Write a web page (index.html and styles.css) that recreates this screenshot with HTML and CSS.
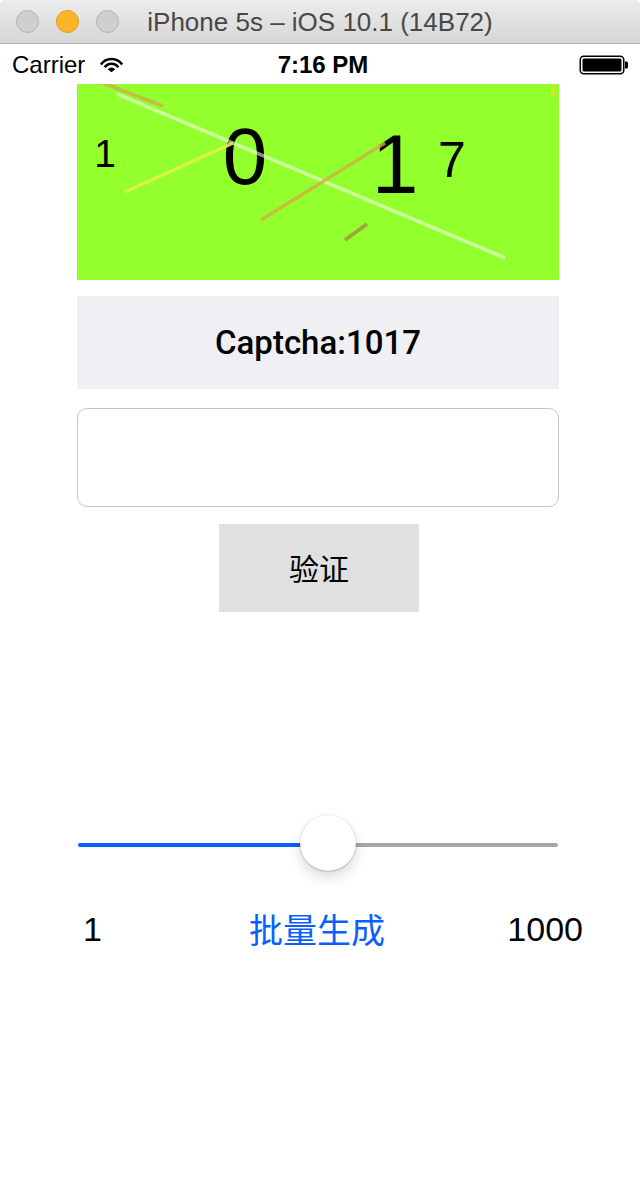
FILE: index.html
```html
<!DOCTYPE html>
<html lang="zh">
<head>
<meta charset="utf-8">
<title>iPhone 5s – iOS 10.1 (14B72)</title>
<link rel="stylesheet" href="styles.css">
</head>
<body>
<div class="window">
  <div class="titlebar">
    <div class="lights">
      <span class="light light-gray"></span>
      <span class="light light-orange"></span>
      <span class="light light-gray"></span>
    </div>
    <div class="title">iPhone 5s – iOS 10.1 (14B72)</div>
    <div></div>
  </div>
  <div class="screen">
    <div class="statusbar">
      <div class="sb-left">
        <span class="carrier">Carrier</span>
        <svg class="wifi" width="25" height="16" viewBox="0 0 25 16">
          <path d="M1.85 7.54 A13 13 0 0 1 23.15 7.54" fill="none" stroke="#000" stroke-width="2.6"/>
          <path d="M5.7 10.24 A8.3 8.3 0 0 1 19.3 10.24" fill="none" stroke="#000" stroke-width="2.6"/>
          <path d="M12.5 15.2 L8.73 12.36 A4.6 4.6 0 0 1 16.27 12.36 Z" fill="#000"/>
        </svg>
      </div>
      <div class="time">7:16 PM</div>
      <div class="sb-right">
        <svg class="battery" width="50" height="20" viewBox="0 0 50 20">
          <rect x="1.25" y="1.25" width="43.5" height="17.5" rx="3.5" fill="none" stroke="#000" stroke-width="1.5"/>
          <rect x="3.5" y="3.5" width="39" height="13" rx="1.5" fill="#000"/>
          <path d="M46 6.5 h1.5 a1.5 1.5 0 0 1 1.5 1.5 v4 a1.5 1.5 0 0 1 -1.5 1.5 h-1.5 Z" fill="#000"/>
        </svg>
      </div>
    </div>
    <main class="content">
      <div class="captcha-img">
        <svg width="482" height="196" viewBox="0 0 482 196">
          <rect width="482" height="196" fill="#93ff2d"/>
          <text x="28" y="83" font-size="39" text-anchor="middle" class="digit">1</text>
          <text x="168" y="100" font-size="80" text-anchor="middle" class="digit">0</text>
          <text x="318" y="109" font-size="84" text-anchor="middle" class="digit">1</text>
          <text x="375" y="93" font-size="50" text-anchor="middle" class="digit">7</text>
          <line x1="26" y1="-1" x2="86" y2="22" stroke="#c9b445" stroke-opacity="0.85" stroke-width="3.5"/>
          <line x1="40" y1="10" x2="428" y2="174" stroke="#ffffff" stroke-opacity="0.55" stroke-width="3.5"/>
          <line x1="48" y1="108" x2="156" y2="59" stroke="#e2f24c" stroke-opacity="0.9" stroke-width="3.5"/>
          <line x1="184" y1="136" x2="308" y2="59" stroke="#d0b040" stroke-opacity="0.8" stroke-width="3.5"/>
          <line x1="268" y1="156" x2="290" y2="140" stroke="#9e9e3a" stroke-opacity="0.9" stroke-width="4"/>
          <line x1="476" y1="0" x2="476" y2="13" stroke="#d6e81e" stroke-width="3"/>
        </svg>
      </div>
      <div class="captcha-label">Captcha:1017</div>
      <input class="code-field" type="text" aria-label="captcha">
      <button class="verify" type="button">验证</button>
      <div class="slider">
        <div class="track">
          <span class="track-min"></span>
          <span class="track-max"></span>
        </div>
        <span class="thumb"></span>
      </div>
      <div class="range-labels">
        <span class="rl-min">1</span>
        <span class="rl-action">批量生成</span>
        <span class="rl-max">1000</span>
      </div>
    </main>
  </div>
</div>
</body>
</html>
```
FILE: styles.css
```css
html, body {
  margin: 0;
  padding: 0;
  background: #ffffff;
}

body {
  width: 640px;
  height: 1180px;
  overflow: hidden;
  font-family: "Liberation Sans", Arial, "Noto Sans CJK SC", sans-serif;
  color: #000;
}

.window {
  width: 640px;
  height: 1180px;
  display: flex;
  flex-direction: column;
}

/* ---------- mac title bar ---------- */
.titlebar {
  height: 43px;
  border-bottom: 1px solid #b4b4b4;
  border-radius: 5px 5px 0 0;
  background: linear-gradient(#ececec, #d6d6d6);
  display: grid;
  grid-template-columns: 1fr auto 1fr;
  align-items: center;
}

.lights {
  display: flex;
  gap: 17px;
  padding-left: 16px;
}

.light {
  width: 21px;
  height: 21px;
  border-radius: 50%;
  display: block;
}

.light-gray {
  background: #cfcfcf;
  border: 1px solid #b3b3b3;
}

.light-orange {
  background: #fdb42b;
  border: 1px solid #de9a1d;
}

.title {
  font-size: 26px;
  color: #484848;
  line-height: 42px;
  white-space: nowrap;
}

/* ---------- iOS status bar ---------- */
.screen {
  flex: 1;
  display: flex;
  flex-direction: column;
}

.statusbar {
  height: 40px;
  display: grid;
  grid-template-columns: 1fr auto 1fr;
  align-items: center;
  font-size: 24px;
}

.sb-left {
  display: flex;
  align-items: center;
  gap: 14px;
  padding-left: 12px;
  padding-top: 2px;
}

.carrier {
  line-height: 30px;
}

.wifi {
  display: block;
  margin-top: -1px;
}

.time {
  font-weight: bold;
  line-height: 30px;
  padding-top: 2px;
  padding-left: 6px;
}

.sb-right {
  display: flex;
  justify-content: flex-end;
  padding-right: 11px;
}

.battery {
  display: block;
  margin-top: 2px;
}

/* ---------- content ---------- */
.content {
  display: flex;
  flex-direction: column;
  align-items: flex-start;
  padding-left: 77px;
}

.captcha-img {
  width: 482px;
  height: 196px;
}

.captcha-img svg {
  display: block;
}

.digit {
  font-family: "Liberation Sans", Arial, sans-serif;
  fill: #000;
}

.captcha-label {
  margin-top: 16px;
  width: 482px;
  height: 93px;
  background: #efeff4;
  display: flex;
  align-items: center;
  justify-content: center;
  font-family: Roboto, "Liberation Sans", sans-serif;
  font-weight: 500;
  font-size: 33px;
}

.code-field {
  margin: 19px 0 0 0;
  width: 482px;
  height: 99px;
  box-sizing: border-box;
  border: 1px solid #c6c6c9;
  border-radius: 10px;
  background: #fff;
  padding: 0 12px;
  font-size: 34px;
  outline: none;
}

.verify {
  margin: 17px 0 0 142px;
  width: 200px;
  height: 88px;
  border: none;
  border-radius: 0;
  background: #e0e0e0;
  font-family: "Noto Sans CJK SC", sans-serif;
  font-size: 30px;
  color: #000;
  padding: 0 0 2px 0;
}

/* ---------- slider ---------- */
.slider {
  position: relative;
  margin: 203px 0 0 1px;
  width: 480px;
  height: 60px;
  display: flex;
  align-items: center;
}

.track {
  display: flex;
  width: 100%;
  height: 4px;
}

.track-min {
  width: 250px;
  background: #0a60fb;
  border-radius: 2px 0 0 2px;
}

.track-max {
  flex: 1;
  background: #a6a6a6;
  border-radius: 0 2px 2px 0;
}

.thumb {
  position: absolute;
  left: 222px;
  top: 0;
  width: 56px;
  height: 56px;
  border-radius: 50%;
  background: #fff;
  box-shadow: 0 0.5px 1.5px rgba(0, 0, 0, 0.35), 0 7px 14px rgba(0, 0, 0, 0.14);
}

.range-labels {
  margin: 34px 0 0 -77px;
  width: 640px;
  box-sizing: border-box;
  padding: 0 57px 0 83px;
  display: grid;
  grid-template-columns: 166px 136px 1fr;
  font-size: 34px;
  line-height: 40px;
}

.rl-action {
  font-family: "Noto Sans CJK SC", sans-serif;
  color: #0a60fb;
  white-space: nowrap;
}

.rl-max {
  text-align: right;
}
```
